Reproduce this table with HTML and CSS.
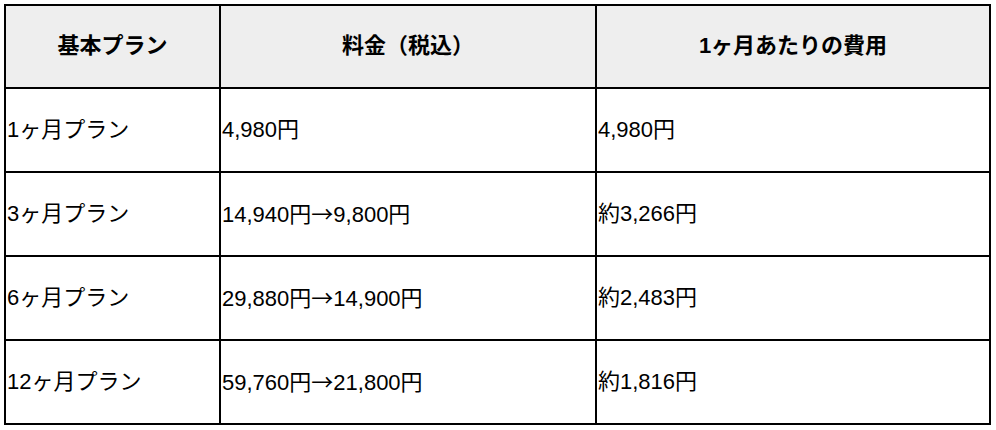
FILE: index.html
```html
<!DOCTYPE html>
<html lang="ja">
<head>
<meta charset="utf-8">
<title>料金プラン</title>
<link rel="stylesheet" href="styles.css">
</head>
<body>
<table class="plan-table">
  <colgroup>
    <col class="col-plan">
    <col class="col-price">
    <col class="col-month">
  </colgroup>
  <thead>
    <tr class="head-row">
      <th>基本プラン</th>
      <th>料金（税込）</th>
      <th>1ヶ月あたりの費用</th>
    </tr>
  </thead>
  <tbody>
    <tr class="body-row">
      <td>1ヶ月プラン</td>
      <td>4,980円</td>
      <td>4,980円</td>
    </tr>
    <tr class="body-row">
      <td>3ヶ月プラン</td>
      <td>14,940円<span class="arrow">→</span>9,800円</td>
      <td>約3,266円</td>
    </tr>
    <tr class="body-row">
      <td>6ヶ月プラン</td>
      <td>29,880円<span class="arrow">→</span>14,900円</td>
      <td>約2,483円</td>
    </tr>
    <tr class="body-row">
      <td>12ヶ月プラン</td>
      <td>59,760円<span class="arrow">→</span>21,800円</td>
      <td>約1,816円</td>
    </tr>
  </tbody>
</table>
</body>
</html>
```
FILE: styles.css
```css
html, body {
  background: #ffffff;
}
body {
  margin: 4px;
  font-family: "Liberation Sans", "Noto Sans CJK JP", sans-serif;
  color: #000;
}
.plan-table {
  border-collapse: collapse;
  table-layout: fixed;
  width: 987px;
  border: 2px solid #000;
  font-size: 22px;
}
.col-plan { width: 215px; }
.col-price { width: 376px; }
.col-month { width: 394px; }
.plan-table th,
.plan-table td {
  border: 2px solid #000;
  padding: 0 1px;
  vertical-align: middle;
  line-height: 1.2;
}
.head-row { height: 83px; }
.head-row th {
  background: #eeeeee;
  font-weight: bold;
  text-align: center;
}
.body-row { height: 84px; }
.body-row td {
  text-align: left;
  font-weight: normal;
}
.arrow {
  font-family: "Noto Sans CJK JP", sans-serif;
}
```
